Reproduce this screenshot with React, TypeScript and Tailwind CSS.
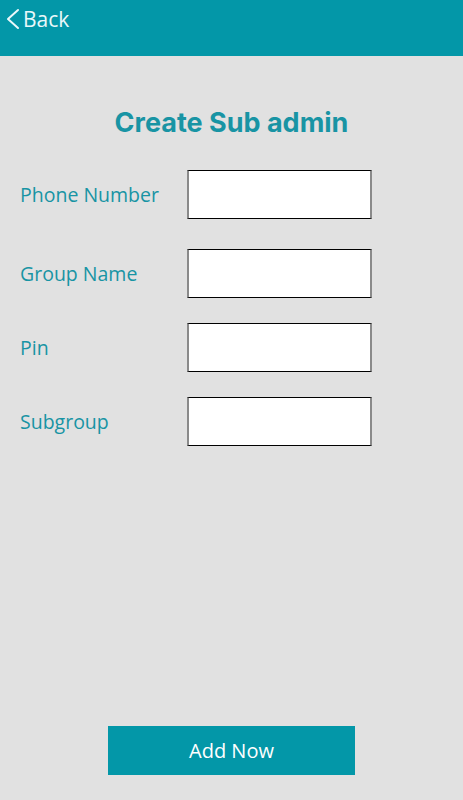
import React from 'react';

const fields = ['Phone Number', 'Group Name', 'Pin', 'Subgroup'];

function BackChevron() {
  return (
    <svg width="14" height="22" viewBox="0 0 14 22" fill="none" className="shrink-0">
      <path d="M12 2 L2 11 L12 20" stroke="currentColor" strokeWidth="2" strokeLinecap="round" strokeLinejoin="round" />
    </svg>
  );
}

function FieldRow({ label, top }: { label: string; top: string }) {
  return (
    <div className={`flex items-center ${top}`}>
      <label className="w-[187px] shrink-0 pl-5 text-[19.5px] text-[#1894a4]">{label}</label>
      <input
        type="text"
        className="h-[49px] w-[185px] border border-black border-x-2 border-x-[#8a8a8a] bg-white outline-none"
      />
    </div>
  );
}

export default function App() {
  return (
    <div
      className="flex min-h-[800px] flex-col bg-[#e1e1e1]"
      style={{ fontFamily: '"Open Sans", "Liberation Sans", sans-serif' }}
    >
      <header className="h-14 bg-[#0397a8]">
        <button className="flex items-center gap-[3px] pl-[6px] pt-[5px] text-[21px] leading-[28px] text-[#eaf8fa]">
          <BackChevron />
          <span>Back</span>
        </button>
      </header>

      <h1 className="mt-[50px] text-center font-['Inter',sans-serif] text-[27px] font-bold leading-[34px] text-[#1894a4]">
        Create Sub admin
      </h1>

      <div className="mt-[30px]">
        <FieldRow label={fields[0]} top="" />
        <FieldRow label={fields[1]} top="mt-[30px]" />
        <FieldRow label={fields[2]} top="mt-[25px]" />
        <FieldRow label={fields[3]} top="mt-[25px]" />
      </div>

      <div className="mt-auto flex justify-center pb-[25px]">
        <button className="h-[49px] w-[247px] bg-[#0397a8] text-[20px] text-white">Add Now</button>
      </div>
    </div>
  );
}
